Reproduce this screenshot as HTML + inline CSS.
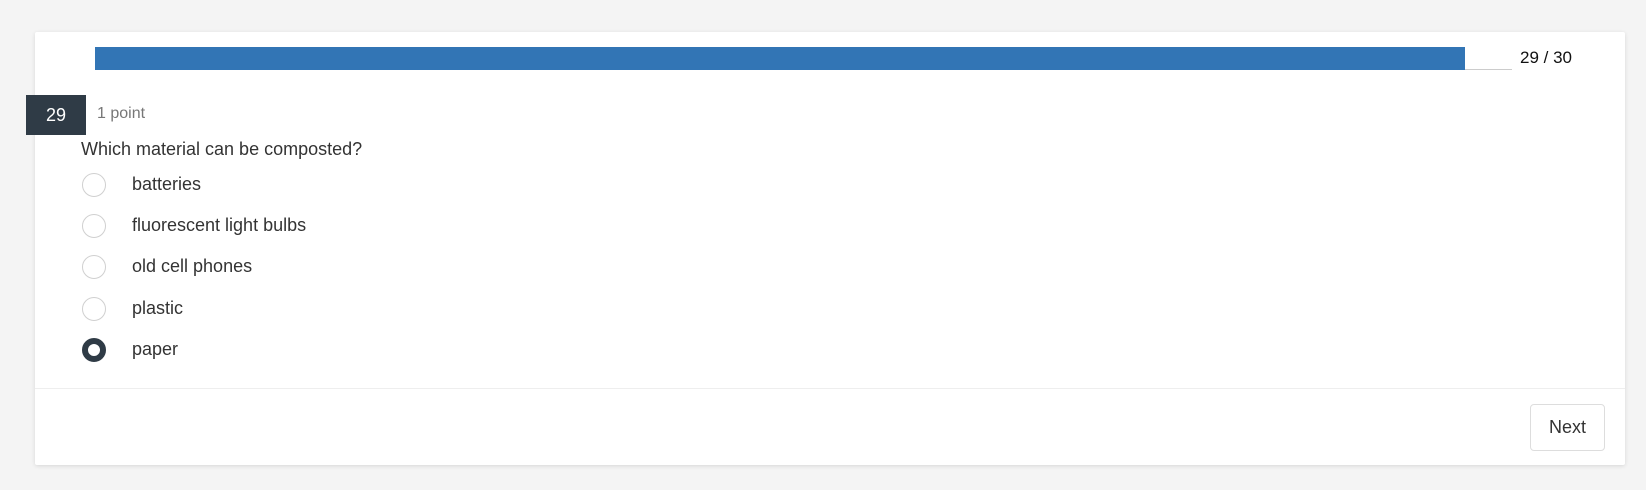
<!DOCTYPE html>
<html><head><style>
body{margin:0;width:1646px;height:490px;background:#f4f4f4;font-family:"Liberation Sans",sans-serif;position:relative;overflow:hidden}
.card{position:absolute;left:35px;top:32px;width:1590px;height:433px;background:#fff;box-shadow:0 1px 4px rgba(0,0,0,.12);border-radius:2px}
.a{position:absolute}
.bar{left:95px;top:47px;width:1370px;height:23px;background:#3275b5}
.track{left:1465px;top:69px;width:47px;height:1px;background:#ccc}
.cnt{left:1520px;top:48px;font-size:17px;color:#111}
.badge{left:26px;top:95px;width:60px;height:40px;background:#2f3b46;color:#fff;font-size:18px;text-align:center;line-height:40px}
.pt{left:97px;top:105px;font-size:16px;color:#777}
.q{left:81px;top:139px;font-size:18px;color:#333}
.r{position:absolute;left:82px;width:22px;height:22px;border:1px solid #d0d0d0;border-radius:50%}
.sel{border:6px solid #2f3b46;width:12px;height:12px}
.o{position:absolute;left:132px;font-size:18px;color:#333}
.div{left:35px;top:388px;width:1590px;height:1px;background:#eee}
.btn{left:1530px;top:404px;width:73px;height:45px;border:1px solid #ddd;border-radius:4px;font-size:18px;color:#333;text-align:center;line-height:45px}
</style></head><body>
<div class="card"></div>
<div class="a bar"></div><div class="a track"></div>
<div class="a cnt">29 / 30</div>
<div class="a badge">29</div>
<div class="a pt">1 point</div>
<div class="a q">Which material can be composted?</div>
<div class="r" style="top:173px"></div><div class="o" style="top:174px">batteries</div>
<div class="r" style="top:214px"></div><div class="o" style="top:215px">fluorescent light bulbs</div>
<div class="r" style="top:255px"></div><div class="o" style="top:256px">old cell phones</div>
<div class="r" style="top:297px"></div><div class="o" style="top:298px">plastic</div>
<div class="r sel" style="top:338px"></div><div class="o" style="top:339px">paper</div>
<div class="a div"></div>
<div class="a btn">Next</div>
</body></html>
